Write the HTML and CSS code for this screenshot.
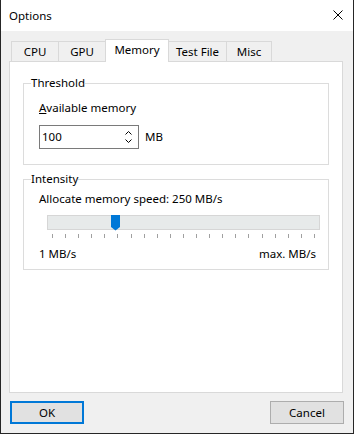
FILE: index.html
```html
<!DOCTYPE html>
<html>
<head>
<meta charset="utf-8">
<title>Options</title>
<link rel="stylesheet" href="styles.css">
</head>
<body>
<div class="window">
  <div class="titlebar">
    <span class="title">Options</span>
    <svg class="close" width="10" height="10" viewBox="0 0 10 10"><path d="M0.5 0.5L9.5 9.5M9.5 0.5L0.5 9.5" stroke="#000" stroke-width="1" fill="none"/></svg>
  </div>
  <div class="client">
    <div class="tabs">
      <div class="tab t-cpu">CPU</div>
      <div class="tab t-gpu">GPU</div>
      <div class="tab t-mem active">Memory</div>
      <div class="tab t-test">Test File</div>
      <div class="tab t-misc">Misc</div>
    </div>
    <div class="panel">
      <fieldset class="group g-threshold">
        <legend>Threshold</legend>
        <div class="group-body">
          <div class="label"><u>A</u>vailable memory</div>
          <div class="spin-row">
            <div class="spin">
              <span class="spin-value">100</span>
              <svg class="spin-arrows" width="7" height="12" viewBox="0 0 7 12"><path d="M0.5 3.5L3.5 0.5L6.5 3.5M0.5 8.5L3.5 11.5L6.5 8.5" stroke="#000" stroke-width="1" fill="none"/></svg>
            </div>
            <span class="unit">MB</span>
          </div>
        </div>
      </fieldset>
      <fieldset class="group g-intensity">
        <legend>Intensity</legend>
        <div class="group-body">
          <div class="label">Allocate memory speed: 250 MB/s</div>
          <div class="slider">
            <div class="track">
              <svg class="thumb" style="left:63px" width="9" height="16" viewBox="0 0 9 16"><polygon points="0,0 9,0 9,12 4.5,15.5 0,12" fill="#0078d7"/></svg>
            </div>
            <div class="ticks">
              <span></span><span></span><span></span><span></span><span></span><span></span><span></span>
              <span></span><span></span><span></span><span></span><span></span><span></span><span></span>
              <span></span><span></span><span></span><span></span><span></span><span></span><span></span>
            </div>
          </div>
          <div class="scale-labels"><span>1 MB/s</span><span>max. MB/s</span></div>
        </div>
      </fieldset>
    </div>
    <div class="buttons">
      <button class="btn btn-default">OK</button>
      <button class="btn">Cancel</button>
    </div>
  </div>
</div>
</body>
</html>
```
FILE: styles.css
```css
* { box-sizing: border-box; }
html, body { margin: 0; padding: 0; }
body {
  font-family: "Noto Sans", "Open Sans", sans-serif;
  font-size: 11.5px;
  line-height: 16px;
  color: #000;
  background: #fff;
}
.window {
  width: 354px;
  height: 434px;
  border: 1px solid #262626;
  border-top: none;
  display: flex;
  flex-direction: column;
  background: #f0f0f0;
}
.titlebar {
  height: 31px;
  flex: none;
  background: #fff;
  display: flex;
  align-items: flex-start;
  justify-content: space-between;
  padding: 8px 0 0 8px;
}
.close { display: block; margin-top: 2px; margin-right: 10px; }
.client {
  flex: 1;
  display: flex;
  flex-direction: column;
  padding: 8px 10px 9px 8px;
}
.tabs {
  display: flex;
  align-items: flex-end;
  height: 22px;
  flex: none;
  padding-left: 2px;
  position: relative;
  z-index: 1;
}
.tab {
  height: 20px;
  border: 1px solid #d9d9d9;
  border-bottom: none;
  background: #f0f0f0;
  text-align: center;
  padding-top: 2px;
  margin-left: -1px;
  white-space: nowrap;
}
.tab:first-child { margin-left: 0; }
.tab.active { height: 23px; background: #fff; margin-bottom: -1px; }
.t-cpu { width: 48px; }
.t-gpu { width: 48px; }
.t-mem { width: 64px; }
.t-test { width: 59px; }
.t-misc { width: 46px; }
.panel {
  flex: 1;
  background: #fff;
  border: 1px solid #d9d9d9;
  padding: 13px 13px 0 13px;
  display: flex;
  flex-direction: column;
}
.group {
  margin: 0;
  padding: 0;
  border: 1px solid #dcdcdc;
  min-width: 0;
}
.group legend {
  padding: 0;
  margin-left: 7px;
  line-height: 16px;
}
.g-threshold .group-body { padding: 9px 12px 15px 15px; }
.spin-row { display: flex; align-items: center; margin-top: 9px; }
.spin {
  width: 100px;
  height: 24px;
  border: 1px solid #7a7a7a;
  display: flex;
  align-items: center;
  justify-content: space-between;
  padding: 0 6px 0 2px;
}
.spin-arrows { display: block; }
.unit { margin-left: 6px; }
.g-intensity { margin-top: 6px; }
.g-intensity .group-body { padding: 4px 12px 7px 15px; }
.slider { margin: 8px -4px 0 8px; }
.track {
  height: 15px;
  background: #e7eaea;
  border: 1px solid #d6d6d6;
  position: relative;
}
.thumb { position: absolute; top: -1px; display: block; }
.ticks {
  display: flex;
  justify-content: space-between;
  height: 4px;
  margin-top: 4px;
  padding: 0 5px;
}
.ticks span { width: 1px; height: 4px; background: #a0a0a0; }
.scale-labels {
  display: flex;
  justify-content: space-between;
  margin-top: 8px;
}
.buttons {
  display: flex;
  justify-content: space-between;
  margin: 8px -1px 0 1px;
  height: 23px;
  flex: none;
}
.btn {
  width: 74px;
  height: 23px;
  font: inherit;
  line-height: 16px;
  color: #000;
  background: #e1e1e1;
  border: 1px solid #adadad;
  padding: 0;
  margin: 0;
}
.btn-default { border: 2px solid #0078d7; }
```
